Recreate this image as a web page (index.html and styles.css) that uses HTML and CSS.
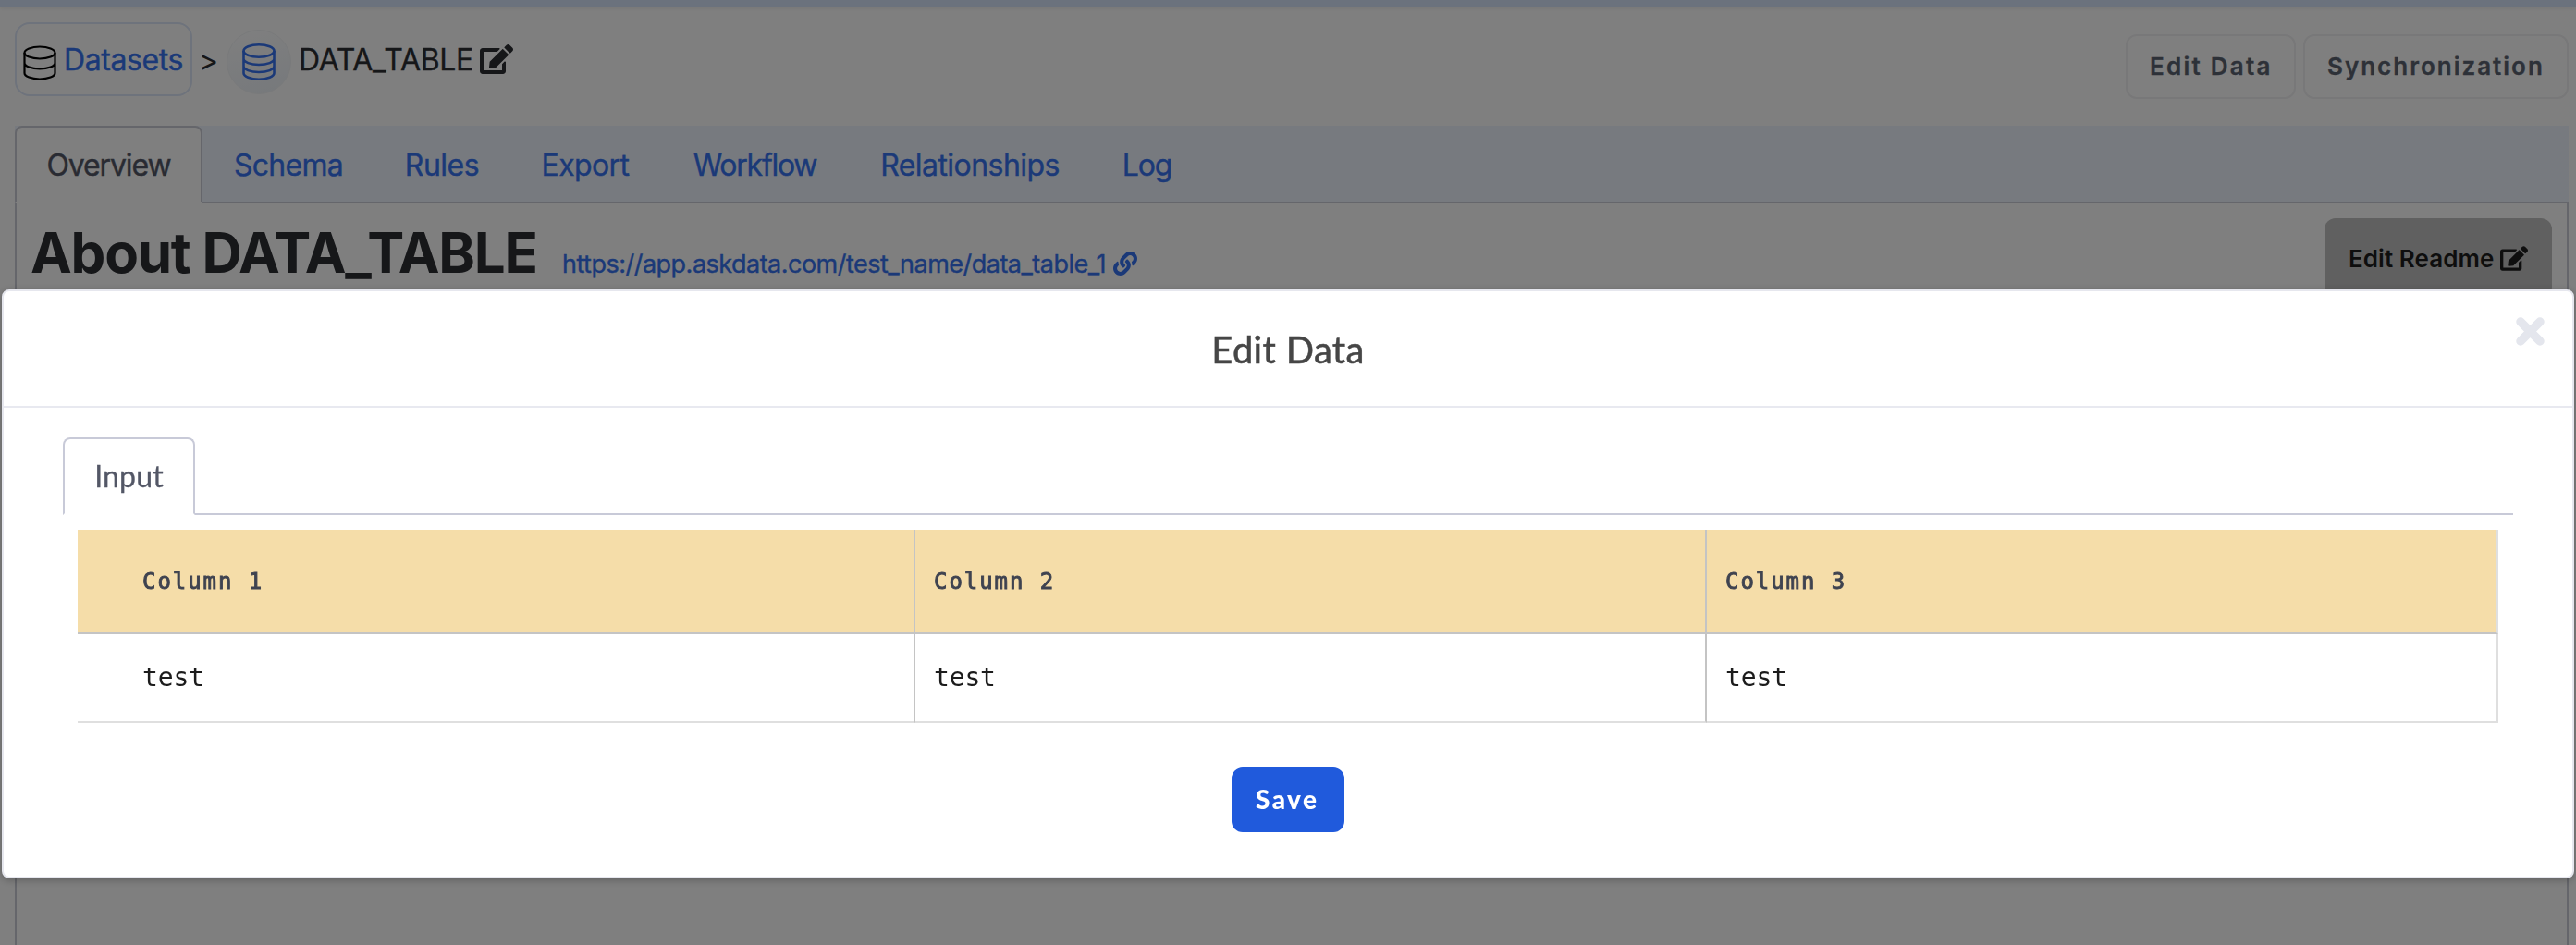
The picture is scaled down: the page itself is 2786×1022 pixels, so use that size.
FILE: index.html
```
<!DOCTYPE html>
<html lang="en">
<head>
<meta charset="utf-8">
<title>Edit Data</title>
<link rel="stylesheet" href="styles.css">
</head>
<body>
<svg class="defs" width="0" height="0">
  <symbol id="edit" viewBox="0 0 576 512"><path fill="currentColor" d="M402.6 83.2l90.2 90.2c3.8 3.8 3.8 10 0 13.8L274.4 405.6l-92.8 10.3c-12.4 1.4-22.9-9.1-21.5-21.5l10.3-92.8L388.8 83.2c3.8-3.8 10-3.8 13.8 0zm162-22.9l-48.8-48.8c-15.2-15.2-39.9-15.2-55.2 0l-35.4 35.4c-3.8 3.8-3.8 10 0 13.8l90.2 90.2c3.8 3.8 10 3.8 13.8 0l35.4-35.4c15.2-15.3 15.2-40 0-55.2zM384 346.2V448H64V128h229.8c3.2 0 6.2-1.3 8.5-3.5l40-40c7.6-7.6 2.2-20.5-8.5-20.5H48C21.5 64 0 85.5 0 112v352c0 26.5 21.5 48 48 48h352c26.5 0 48-21.5 48-48V306.2c0-10.7-12.9-16-20.5-8.5l-40 40c-2.2 2.3-3.5 5.3-3.5 8.5z"/></symbol>
  <symbol id="link" viewBox="0 0 512 512"><path fill="currentColor" d="M326.612 185.391c59.747 59.809 58.927 155.698.36 214.59-.11.12-.24.25-.36.37l-67.2 67.2c-59.27 59.27-155.699 59.262-214.96 0-59.27-59.26-59.27-155.7 0-214.96l37.106-37.106c9.84-9.84 26.786-3.3 27.294 10.606.648 17.722 3.826 35.527 9.69 52.721 1.986 5.822.567 12.262-3.783 16.612l-13.087 13.087c-28.026 28.026-28.905 73.66-1.155 101.96 28.024 28.579 74.086 28.749 102.325.51l67.2-67.19c28.191-28.191 28.073-73.757 0-101.83-3.701-3.694-7.429-6.564-10.341-8.569a16.037 16.037 0 0 1-6.947-12.606c-.396-10.567 3.348-21.456 11.698-29.806l21.054-21.055c5.521-5.521 14.182-6.199 20.584-1.731a152.482 152.482 0 0 1 20.522 17.197zM467.547 44.449c-59.261-59.262-155.69-59.27-214.96 0l-67.2 67.2c-.12.12-.25.25-.36.37-58.566 58.892-59.387 154.781.36 214.59a152.454 152.454 0 0 0 20.521 17.196c6.402 4.468 15.064 3.789 20.584-1.731l21.054-21.055c8.35-8.35 12.094-19.239 11.698-29.806a16.037 16.037 0 0 0-6.947-12.606c-2.912-2.005-6.64-4.875-10.341-8.569-28.073-28.073-28.191-73.639 0-101.83l67.2-67.19c28.239-28.239 74.3-28.069 102.325.51 27.75 28.3 26.872 73.934-1.155 101.96l-13.087 13.087c-4.35 4.35-5.769 10.79-3.783 16.612 5.864 17.194 9.042 34.999 9.69 52.721.509 13.906 17.454 20.446 27.294 10.606l37.106-37.106c59.271-59.259 59.271-155.699.001-214.959z"/></symbol>
</svg>

<div class="page">
  <div class="topbar"></div>
  <header class="head">
    <nav class="crumbs">
      <a class="crumb">
        <svg class="db" width="36" height="38" viewBox="0 0 36 38" fill="none" stroke="currentColor" stroke-width="2.200"><ellipse cx="18" cy="8" rx="16.5" ry="6.5"/><path d="M1.5 8v22c0 3.600 7.400 6.500 16.500 6.500s16.500-2.900 16.500-6.500V8M1.500 19c0 3.600 7.400 6.500 16.500 6.500s16.500-2.900 16.500-6.500"/></svg>
        <span class="crumb-text">Datasets</span>
      </a>
      <span class="sep">&gt;</span>
      <span class="avatar"><svg width="36" height="40" viewBox="0 0 36 40" fill="none" stroke="currentColor" stroke-width="2.600"><ellipse cx="18" cy="8" rx="16.500" ry="6.700"/><path d="M1.500 8v24c0 3.600 7.400 6.700 16.500 6.700s16.500-3.100 16.500-6.700V8M1.500 16.500c0 3.600 7.400 6.500 16.500 6.500s16.500-2.900 16.500-6.500M1.500 24.500c0 3.600 7.400 6.500 16.500 6.500s16.500-2.900 16.500-6.500"/></svg></span>
      <span class="current">DATA_TABLE</span>
      <svg class="edit" width="36" height="32"><use href="#edit"/></svg>
    </nav>
    <div class="actions">
      <button class="btn btn-edit">Edit Data</button>
      <button class="btn btn-sync">Synchronization</button>
    </div>
  </header>

  <nav class="tabs">
    <a class="tab active">Overview</a>
    <a class="tab schema">Schema</a>
    <a class="tab rules">Rules</a>
    <a class="tab export">Export</a>
    <a class="tab workflow">Workflow</a>
    <a class="tab relations">Relationships</a>
    <a class="tab log">Log</a>
  </nav>

  <main class="panel">
    <h1 class="about">About DATA_TABLE</h1>
    <a class="url">https://app.askdata.com/test_name/data_table_1</a>
    <svg class="link-icon" width="26" height="26"><use href="#link"/></svg>
    <button class="readme">Edit Readme <svg width="30" height="27"><use href="#edit"/></svg></button>
  </main>
</div>

<div class="backdrop">
  <section class="modal">
    <header class="modal-head">
      <h2 class="modal-title">Edit Data</h2>
      <svg class="close" width="31" height="31" viewBox="0 0 31 31" stroke="#e4e6ed" stroke-width="9.500" stroke-linecap="round"><path d="M5 5l21 21M26 5L5 26"/></svg>
    </header>
    <nav class="modal-tabs"><a class="modal-tab">Input</a></nav>
    <div class="grid">
      <div class="th first">Column 1</div>
      <div class="th">Column 2</div>
      <div class="th last">Column 3</div>
      <div class="td first">test</div>
      <div class="td">test</div>
      <div class="td last">test</div>
    </div>
    <button class="save">Save</button>
  </section>
</div>
</body>
</html>
```
FILE: styles.css
```
* { box-sizing: border-box; }

body {
  margin: 0;
  height: 1022px;
  overflow: hidden;
  font-family: Inter, "Liberation Sans", sans-serif;
  font-size: 32px;
  color: #2c2e33;
  background: #fff;
}

button { font-family: inherit; cursor: pointer; }
svg { flex: none; display: block; }
.defs { position: absolute; }

.page {
  display: flex;
  flex-direction: column;
  height: 1022px;
}

.topbar {
  height: 8px;
  flex: none;
  background: #d7e5fb;
  box-shadow: 0 1px 4px rgba(0, 0, 0, .08);
}

/* Breadcrumbs and page actions */
.head {
  display: flex;
  justify-content: space-between;
  flex: none;
  height: 128px;
  padding: 16px 8px 0 16px;
}

.crumbs { display: flex; align-items: center; height: 80px; }

.crumb {
  display: flex;
  align-items: center;
  width: 192px;
  height: 80px;
  padding: 7px 0 0 7px;
  border: 2px solid #dde6f8;
  border-radius: 16px;
  color: #3673f0;
}

.db { color: #000; }

.crumb-text {
  margin: -6px 0 0 8px;
  letter-spacing: -.4px;
  -webkit-text-stroke: .4px currentColor;
}

.sep { width: 37px; padding-left: 7px; margin-top: 3px; }

.avatar {
  display: flex;
  align-items: center;
  justify-content: center;
  width: 70px;
  height: 70px;
  margin-top: 6px;
  border-radius: 50%;
  border: 1px solid #f2f4f6;
  background: linear-gradient(165deg, #fff, #edf2f8);
  color: #3673f0;
}

.current {
  width: 204px;
  margin-top: 1px;
  padding-left: 8px;
  letter-spacing: -.36px;
  white-space: nowrap;
  -webkit-text-stroke: .3px currentColor;
}

.actions { display: flex; gap: 8px; padding-top: 13px; }

.btn {
  height: 70px;
  padding: 0 0 2px 24px;
  text-align: left;
  border: 2px solid #f0f0f2;
  border-radius: 12px;
  background: #fff;
  color: #5b6370;
  font-size: 26px;
  font-weight: 600;
  -webkit-text-stroke: .3px currentColor;
}

.btn-edit { width: 184px; letter-spacing: 2.25px; }
.btn-sync { width: 287px; letter-spacing: 2px; }

/* Dataset tabs */
.tabs {
  display: flex;
  flex: none;
  height: 84px;
  margin: 0 8px 0 16px;
  background: #eff5ff;
  box-shadow: inset 0 -2px #caccd6;
}

.tab {
  height: 84px;
  line-height: 86px;
  text-align: center;
  color: #3673f0;
  -webkit-text-stroke: .4px currentColor;
}

.tab.active {
  width: 203px;
  line-height: 82px;
  letter-spacing: -1.12px;
  color: #535766;
  background: #fff;
  border: 2px solid #caccd6;
  border-bottom-color: #fff;
  border-radius: 8px 8px 0 0;
}

.schema { width: 186px; letter-spacing: -.75px; }
.rules { width: 146px; letter-spacing: -.48px; }
.export { width: 164px; letter-spacing: -.61px; }
.workflow { width: 203px; letter-spacing: -1.25px; }
.relations { width: 262px; letter-spacing: -.55px; }
.log { width: 121px; letter-spacing: -1.14px; }

.panel {
  display: flex;
  align-items: flex-start;
  flex: 1;
  margin: 0 8px 0 16px;
  padding: 16px 16px 0 15px;
  border: solid #caccd6;
  border-width: 0 2px;
}

.about {
  width: 575px;
  margin: 0;
  line-height: 74px;
  font-size: 60px;
  font-weight: 700;
  letter-spacing: -1.24px;
  white-space: nowrap;
}

.url {
  width: 596px;
  margin-top: 30px;
  line-height: 40px;
  font-size: 27px;
  letter-spacing: -.51px;
  color: #3673f0;
  white-space: nowrap;
  -webkit-text-stroke: .4px currentColor;
}

.link-icon { margin-top: 36px; color: #3673f0; }

.readme {
  display: flex;
  align-items: center;
  gap: 7px;
  width: 246px;
  height: 87px;
  margin-left: auto;
  padding: 0 0 0 26px;
  border: 0;
  border-radius: 12px;
  background: #c0c0c0;
  color: #1c1c1c;
  font-size: 26px;
  font-weight: 600;
  letter-spacing: .07px;
  white-space: nowrap;
}

/* Dialog over the page */
.backdrop {
  position: fixed;
  inset: 0;
  padding: 313px 2px 0;
  background: rgba(0, 0, 0, .5);
}

.modal {
  display: flex;
  flex-direction: column;
  height: 637px;
  border: 2px solid #e6e7ee;
  border-radius: 8px;
  background: #fff;
  box-shadow: 0 2px 8px rgba(0, 0, 0, .25);
  font-family: Lato, sans-serif;
}

.modal-head {
  display: grid;
  grid-template-columns: 1fr auto 1fr;
  flex: none;
  height: 126px;
  border-bottom: 2px solid #e8e9f0;
}

.modal-title {
  grid-column: 2;
  margin: 0;
  line-height: 126px;
  font-size: 40px;
  font-weight: 400;
  letter-spacing: .3px;
  color: #464646;
  -webkit-text-stroke: .5px currentColor;
}

.close { justify-self: end; margin: 28px 30px 0 0; }

.modal-tabs {
  display: flex;
  flex: none;
  height: 84px;
  margin: 32px 64px 0;
  box-shadow: inset 0 -2px #c8cad8;
}

.modal-tab {
  width: 143px;
  line-height: 80px;
  text-align: center;
  letter-spacing: .16px;
  color: #535766;
  background: #fff;
  border: 2px solid #c8cad8;
  border-bottom-color: #fff;
  border-radius: 8px 8px 0 0;
  -webkit-text-stroke: .3px currentColor;
}

.grid {
  display: grid;
  grid-template-columns: 906px 856px 856px;
  grid-template-rows: 113px 96px;
  flex: none;
  margin: 16px 0 0 80px;
  font-family: "DejaVu Sans Mono", "Liberation Mono", monospace;
}

.th {
  padding: 0 0 0 20px;
  line-height: 112px;
  background: #f5dda9;
  border: solid #c4c4c4;
  border-width: 0 2px 2px 0;
  color: #3f4350;
  font-size: 24px;
  letter-spacing: 1.95px;
  -webkit-text-stroke: .9px currentColor;
}

.td {
  padding: 0 0 0 20px;
  line-height: 93px;
  border: solid #c4c4c4;
  border-width: 0 2px 2px 0;
  border-bottom-color: #dfdfdf;
  color: #1c1c1c;
  font-size: 28px;
  letter-spacing: -.15px;
}

.first { padding-left: 70px; }
.last { border-right-color: #dfdfdf; }

.save {
  align-self: center;
  width: 122px;
  height: 70px;
  margin-top: 48px;
  padding: 0 0 2px 26px;
  text-align: left;
  border: 0;
  border-radius: 12px;
  background: #205adc;
  color: #fff;
  font-size: 28px;
  font-weight: 900;
  letter-spacing: 2.4px;
}
```
